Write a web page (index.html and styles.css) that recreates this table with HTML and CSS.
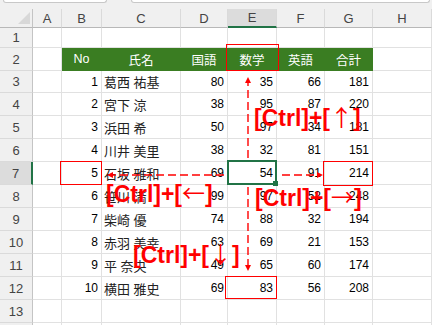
FILE: index.html
```html
<!DOCTYPE html>
<html lang="ja">
  <head>
    <meta charset="UTF-8" />
    <meta name="viewport" content="width=device-width, initial-scale=1.0" />
    <title>成績表</title>
    <link rel="stylesheet" href="styles.css">
  </head>
  <body>
    <div class="page">
      <div class="chrome">
        <div class="namebox"></div>
        <div class="formula"></div>
      </div>

      <div class="sheet">
        <div class="row colhead">
          <div class="corner"><span class="tri"></span></div>
          <div class="ch">A</div>
          <div class="ch">B</div>
          <div class="ch">C</div>
          <div class="ch">D</div>
          <div class="ch sel">E</div>
          <div class="ch">F</div>
          <div class="ch">G</div>
          <div class="ch">H</div>
        </div>

        <div class="row r1">
          <div class="rh">1</div>
          <div class="c"></div><div class="c"></div><div class="c"></div><div class="c"></div>
          <div class="c"></div><div class="c"></div><div class="c"></div><div class="c"></div>
        </div>

        <div class="row">
          <div class="rh">2</div>
          <div class="c"></div>
          <div class="c th">No</div>
          <div class="c th">氏名</div>
          <div class="c th">国語</div>
          <div class="c th">数学</div>
          <div class="c th">英語</div>
          <div class="c th">合計</div>
          <div class="c"></div>
        </div>

        <div class="row r3">
          <div class="rh">3</div>
          <div class="c"></div><div class="c num">1</div><div class="c name">葛西 祐基</div>
          <div class="c num">80</div><div class="c num">35</div><div class="c num">66</div><div class="c num">181</div><div class="c"></div>
        </div>
        <div class="row">
          <div class="rh">4</div>
          <div class="c"></div><div class="c num">2</div><div class="c name">宮下 涼</div>
          <div class="c num">38</div><div class="c num">95</div><div class="c num">87</div><div class="c num">220</div><div class="c"></div>
        </div>
        <div class="row">
          <div class="rh">5</div>
          <div class="c"></div><div class="c num">3</div><div class="c name">浜田 希</div>
          <div class="c num">50</div><div class="c num">97</div><div class="c num">34</div><div class="c num">181</div><div class="c"></div>
        </div>
        <div class="row">
          <div class="rh">6</div>
          <div class="c"></div><div class="c num">4</div><div class="c name">川井 美里</div>
          <div class="c num">38</div><div class="c num">32</div><div class="c num">81</div><div class="c num">151</div><div class="c"></div>
        </div>
        <div class="row">
          <div class="rh sel">7</div>
          <div class="c"></div><div class="c num">5</div><div class="c name">石坂 雅和</div>
          <div class="c num">69</div><div class="c num">54</div><div class="c num">91</div><div class="c num">214</div><div class="c"></div>
        </div>
        <div class="row">
          <div class="rh">8</div>
          <div class="c"></div><div class="c num">6</div><div class="c name">笹川 満</div>
          <div class="c num">99</div><div class="c num">97</div><div class="c num">52</div><div class="c num">248</div><div class="c"></div>
        </div>
        <div class="row">
          <div class="rh">9</div>
          <div class="c"></div><div class="c num">7</div><div class="c name">柴崎 優</div>
          <div class="c num">74</div><div class="c num">88</div><div class="c num">32</div><div class="c num">194</div><div class="c"></div>
        </div>
        <div class="row">
          <div class="rh">10</div>
          <div class="c"></div><div class="c num">8</div><div class="c name">赤羽 美幸</div>
          <div class="c num">63</div><div class="c num">69</div><div class="c num">21</div><div class="c num">153</div><div class="c"></div>
        </div>
        <div class="row">
          <div class="rh">11</div>
          <div class="c"></div><div class="c num">9</div><div class="c name">平 奈央</div>
          <div class="c num">49</div><div class="c num">65</div><div class="c num">60</div><div class="c num">174</div><div class="c"></div>
        </div>
        <div class="row">
          <div class="rh">12</div>
          <div class="c"></div><div class="c num">10</div><div class="c name">横田 雅史</div>
          <div class="c num">69</div><div class="c num">83</div><div class="c num">56</div><div class="c num">208</div><div class="c"></div>
        </div>
        <div class="row">
          <div class="rh">13</div>
          <div class="c"></div><div class="c"></div><div class="c"></div><div class="c"></div>
          <div class="c"></div><div class="c"></div><div class="c"></div><div class="c"></div>
        </div>
        <div class="row">
          <div class="rh">14</div>
          <div class="c"></div><div class="c"></div><div class="c"></div><div class="c"></div>
          <div class="c"></div><div class="c"></div><div class="c"></div><div class="c"></div>
        </div>
      </div>

      <!-- selection, highlight boxes and jump arrows -->
      <svg class="marks" width="432" height="325" viewBox="0 0 432 325">
        <g fill="none" stroke="#f00" stroke-width="1">
          <rect x="226.5" y="44.5" width="52" height="26" />
          <rect x="60.5" y="161.5" width="41" height="23" />
          <rect x="323.5" y="161.5" width="49" height="24" />
          <rect x="225.5" y="276.5" width="51" height="22" />
        </g>
        <rect x="228" y="161" width="48" height="23" fill="none" stroke="#217346" stroke-width="2" />
        <rect x="273" y="181" width="5" height="5" fill="#217346" />
        <g stroke="#f00" stroke-width="1.4" stroke-dasharray="8 4">
          <line x1="248" y1="158" x2="248" y2="83" />
          <line x1="248" y1="187" x2="248" y2="265" />
          <line x1="224" y1="175" x2="113" y2="175" />
          <line x1="282" y1="175" x2="317" y2="175" />
        </g>
        <g fill="#f00">
          <polygon points="248,77 245,83 251,83" />
          <polygon points="248,271 245,265 251,265" />
          <polygon points="107,175 113,172 113,178" />
          <polygon points="323,175 317,172 317,178" />
        </g>
      </svg>

      <div class="key key-up">[Ctrl]+[<span class="arr">↑</span>]</div>
      <div class="key key-left">[Ctrl]+[<span class="arr">←</span>]</div>
      <div class="key key-right">[Ctrl]+[<span class="arr">→</span>]</div>
      <div class="key key-down">[Ctrl]+[<span class="arr">↓</span>]</div>
    </div>
  </body>
</html>
```

FILE: styles.css
```css
* {
  box-sizing: border-box;
}

body {
  margin: 0;
  background: #fff;
  font-family: "Liberation Sans", "Noto Sans CJK JP", sans-serif;
  font-size: 13px;
  color: #000;
}

.page {
  position: relative;
  width: 432px;
  height: 325px;
  overflow: hidden;
}

/* bottom edges of the name box and formula bar */
.chrome {
  display: flex;
  align-items: flex-start;
  height: 9px;
  padding: 0 2px 0 3px;
  background: #f0f0f0;
}

.namebox,
.formula {
  height: 3px;
  background: #fff;
  border: 1px solid #c8c8c8;
  border-top: none;
  border-radius: 0 0 3px 3px;
}

.namebox {
  width: 104px;
}

.formula {
  flex: 1;
  margin-left: 24px;
}

.row {
  display: grid;
  grid-template-columns: 33px 29px 40px 79px 47px 49px 48px 48px 1fr;
  height: 23px;
}

.colhead {
  height: 19px;
  background: #f0f0f0;
}

.r1 {
  height: 20px;
}

.r3 {
  height: 22px;
}

.corner {
  display: flex;
  align-items: flex-end;
  justify-content: flex-end;
  padding: 0 2px 3px 0;
  border-right: 1px solid #c4c4c4;
  border-bottom: 1px solid #b8b8b8;
}

.tri {
  width: 0;
  height: 0;
  border-left: 12px solid transparent;
  border-bottom: 12px solid #d8d8d8;
}

.ch {
  display: flex;
  align-items: center;
  justify-content: center;
  border-right: 1px solid #dadada;
  border-bottom: 1px solid #b8b8b8;
  color: #444;
}

.ch.sel {
  background: #dcdcdc;
  border-bottom: 2px solid #217346;
}

.rh {
  display: flex;
  align-items: center;
  justify-content: center;
  background: #f0f0f0;
  border-right: 1px solid #c4c4c4;
  border-bottom: 1px solid #dadada;
  color: #444;
}

.rh.sel {
  background: #dcdcdc;
  border-right: 2px solid #217346;
}

.c {
  display: flex;
  align-items: center;
  padding: 0 3px;
  white-space: nowrap;
  border-right: 1px solid #e1e1e1;
  border-bottom: 1px solid #e1e1e1;
}

.num {
  justify-content: flex-end;
  font-size: 12px;
}

.name {
  padding-left: 2px;
  color: #222;
}

.th {
  justify-content: center;
  background: #3a7d22;
  border-color: #3a7d22;
  color: #fff;
  font-size: 12.5px;
}

.marks {
  position: absolute;
  top: 0;
  left: 0;
  pointer-events: none;
}

.key {
  position: absolute;
  color: #f00;
  font-family: "Liberation Sans", "Noto Sans CJK JP", sans-serif;
  font-size: 23px;
  font-weight: 700;
  line-height: 1;
  white-space: nowrap;
}

.arr {
  font-family: "Noto Sans CJK JP", sans-serif;
  font-weight: 400;
}

.key-up {
  left: 254px;
  top: 105px;
}

.key-left {
  left: 106px;
  top: 181px;
}

.key-right {
  left: 255px;
  top: 185px;
}

.key-down {
  left: 133px;
  top: 242px;
}
```
